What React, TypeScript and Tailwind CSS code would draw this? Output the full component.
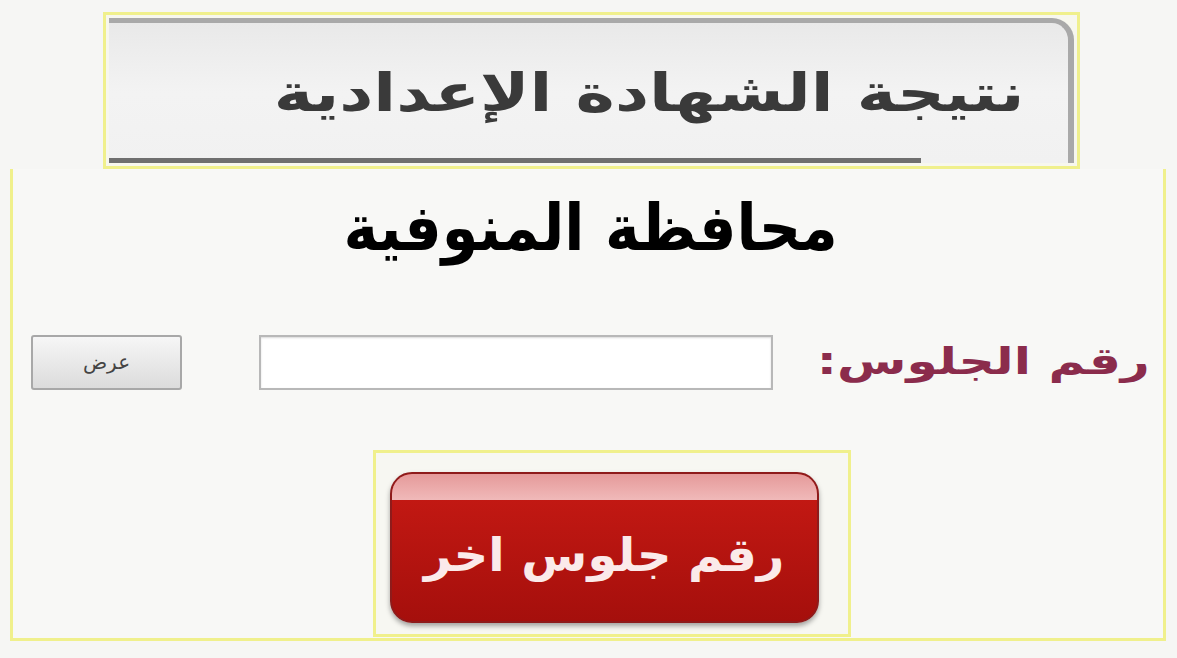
import React from "react";

const arabic = { fontFamily: '"DejaVu Sans", "Noto Sans", sans-serif' };

export default function App() {
  return (
    <div className="h-[658px] w-[1177px] overflow-hidden bg-[#f6f6f4]" style={arabic}>
      {/* header */}
      <div className="ml-[103px] mt-[12px] h-[157px] w-[977px] border-[3px] border-[#f0f08c] bg-[#f7f7ee] p-[3px]">
        <div className="relative flex h-full flex-col rounded-tr-[22px] border-t-[5px] border-r-[6px] border-[#a9a9a9] bg-gradient-to-b from-[#e9e9e9] via-[#f3f3f3] to-[#f1f1f1]">
          <div dir="rtl" className="flex flex-1 items-center pr-[44px] pt-[4px]">
            <span className="inline-block origin-right scale-x-[1.28] text-[52px] font-bold leading-none text-[#3a3a3a]">
              نتيجة الشهادة الإعدادية
            </span>
          </div>
          <div className="h-[5px] w-[812px] bg-[#6f6f6f]" />
        </div>
      </div>

      {/* main box */}
      <div className="ml-[10px] h-[472px] w-[1156px] border-[3px] border-t-0 border-[#f0f08c] bg-[#f8f8f6]">
        <div dir="rtl" className="flex h-[112px] items-center justify-center pl-[6px] pt-[6px]">
          <span className="inline-block scale-x-[0.92] text-[64px] font-bold leading-none text-black">محافظة المنوفية</span>
        </div>

        <div dir="rtl" className="mt-[53px] flex h-[56px] items-center">
          <div className="mr-[13px] w-[327px]">
            <span className="inline-block origin-right scale-x-[1.36] text-[37px] font-bold leading-none text-[#8b2c4c]">
              رقم الجلوس:
            </span>
          </div>
          <input
            className="mr-[50px] h-[55px] w-[514px] border-[2px] border-[#b8b8b8] bg-white shadow-[inset_0_1px_2px_rgba(0,0,0,0.15)] outline-none"
            type="text"
          />
          <button className="mr-[77px] h-[55px] w-[151px] rounded-[3px] border-[2px] border-[#a8a8a8] bg-gradient-to-b from-[#f6f6f6] to-[#dcdcdc] text-[20px] text-[#444]">
            عرض
          </button>
        </div>

        <div className="ml-[360px] mt-[60px] h-[187px] w-[478px] border-[3px] border-[#f0f08c] bg-[#f7f7f2] px-[14px] pt-[19px]">
          <div className="flex h-[151px] w-[429px] flex-col overflow-hidden rounded-[22px] border-[2px] border-[#8e1b1b] bg-gradient-to-b from-[#c81a14] to-[#a50f0c] shadow-[0_3px_5px_rgba(0,0,0,0.35)]">
            <div className="h-[26px] bg-gradient-to-b from-[#e59a9a] to-[#f0b9b9]" />
            <div dir="rtl" className="flex flex-1 items-center justify-center pb-[12px]">
              <span className="inline-block scale-x-[1.04] text-[46px] font-bold leading-none text-[#fbeaea]">رقم جلوس اخر</span>
            </div>
          </div>
        </div>
      </div>
    </div>
  );
}
